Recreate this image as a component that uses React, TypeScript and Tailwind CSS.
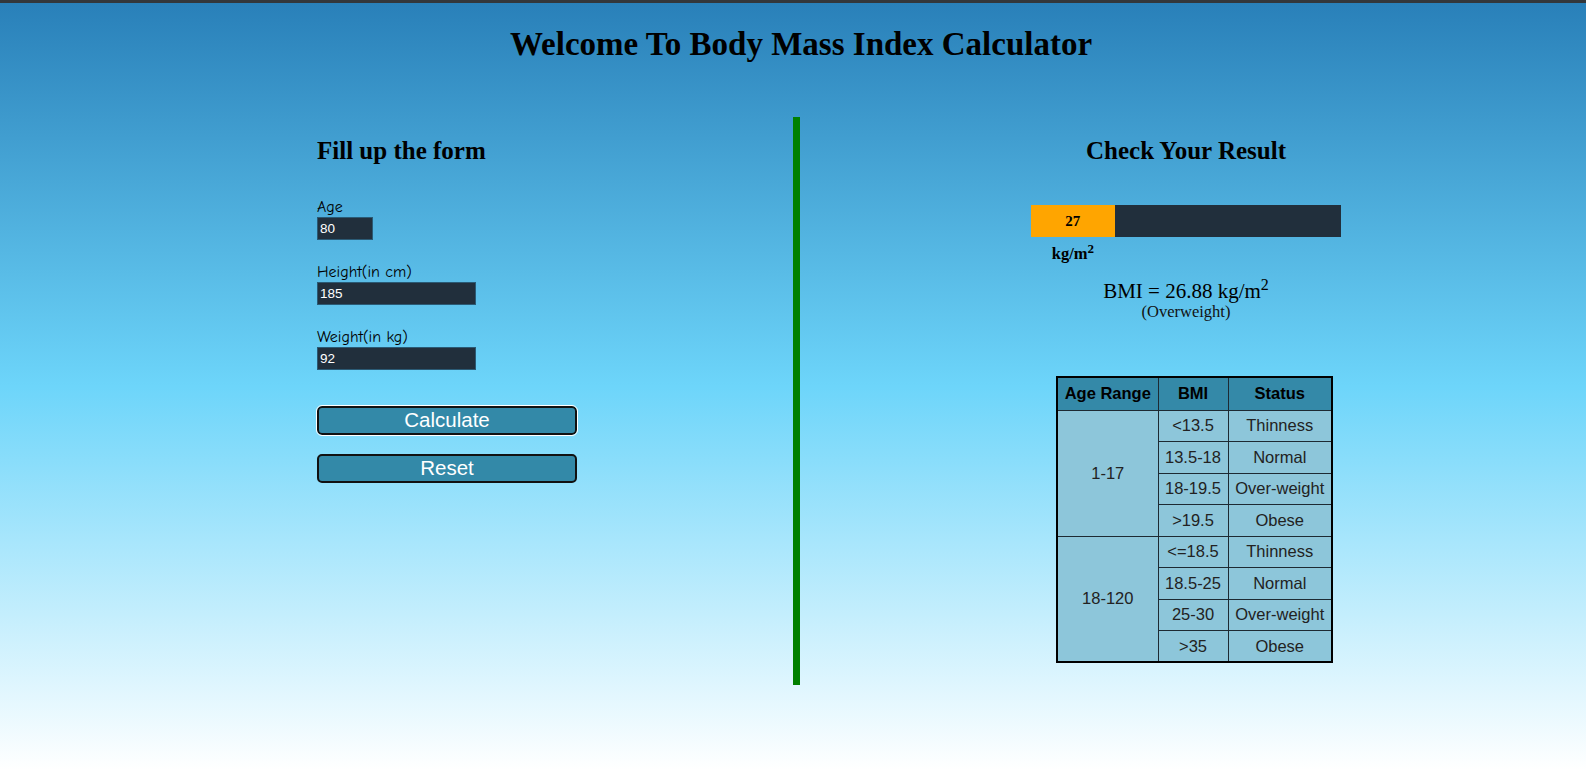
import React from "react"

const rows = [
  { age: "1-17", bmi: "<13.5", status: "Thinness" },
  { age: "", bmi: "13.5-18", status: "Normal" },
  { age: "", bmi: "18-19.5", status: "Over-weight" },
  { age: "", bmi: ">19.5", status: "Obese" },
  { age: "18-120", bmi: "<=18.5", status: "Thinness" },
  { age: "", bmi: "18.5-25", status: "Normal" },
  { age: "", bmi: "25-30", status: "Over-weight" },
  { age: "", bmi: ">35", status: "Obese" },
]

const Field = ({ label, value, wide }: { label: string; value: string; wide?: boolean }) => (
  <div className="mb-[23px] flex flex-col">
    <label className="h-[19px] text-[16px] leading-[19px] text-black [font-family:'Comic_Sans_MS','Comic_Neue',cursive]">
      {label}
    </label>
    <input
      readOnly
      value={value}
      className={`h-[23px] ${wide ? "w-[159px]" : "w-[56px]"} border border-[#2a5a75] bg-[#212f3c] px-[2px] text-[13.5px] text-white outline-none [font-family:'Liberation_Sans',Arial,sans-serif]`}
    />
  </div>
)

export default function App() {
  const bmi = 26.88
  const pct = Math.round(bmi)
  const serif = "[font-family:'Liberation_Serif','Times_New_Roman',serif]"
  const sans = "[font-family:'Liberation_Sans',Arial,sans-serif]"

  return (
    <div className="flex min-h-[770px] flex-col border-t-[3px] border-[#33373b] bg-[linear-gradient(#2980b9,#6dd5fa,#ffffff)]">
      <h1 className={`pl-[16px] pt-[23px] text-center text-[33px] font-bold leading-[37px] text-black ${serif}`}>
        Welcome To Body Mass Index Calculator
      </h1>

      <div className="mt-[54px] flex">
        {/* form */}
        <div className="w-[793px] pl-[317px] pt-[20px]">
          <h2 className={`text-[25px] font-bold leading-[28px] text-black ${serif}`}>Fill up the form</h2>
          <div className="mt-[33px]">
            <Field label="Age" value="80" />
            <Field label="Height(in cm)" value="185" wide />
            <Field label="Weight(in kg)" value="92" wide />
          </div>
          <div className="mt-[36px] flex flex-col gap-[19px]">
            <button
              className={`h-[29px] w-[260px] rounded-[5px] border-2 border-[#111] bg-[#3389a8] text-[20.5px] leading-none text-white outline outline-1 outline-white ${sans}`}
            >
              Calculate
            </button>
            <button
              className={`h-[29px] w-[260px] rounded-[5px] border-2 border-[#111] bg-[#3389a8] text-[20.5px] leading-none text-white ${sans}`}
            >
              Reset
            </button>
          </div>
        </div>

        <div className="h-[568px] w-[7px] bg-[#008000]" />

        {/* result */}
        <div className="flex-1 pl-[231px] pt-[20px]">
          <div className="w-[310px]">
            <h2 className={`text-center text-[25px] font-bold leading-[28px] text-black ${serif}`}>Check Your Result</h2>
            <div className="mt-[40px] flex h-[32px] w-[310px] bg-[#212f3c]">
              <div
                className={`flex h-full items-center justify-center bg-[#ffa500] text-[15px] font-bold text-black ${serif}`}
                style={{ width: `${pct}%` }}
              >
                {pct}
              </div>
            </div>
            <div
              className={`mt-[7px] text-center text-[16.5px] font-bold leading-[20px] text-black ${serif}`}
              style={{ width: `${pct}%` }}
            >
              kg/m<sup className="text-[13px]">2</sup>
            </div>
            <div className={`mt-[15px] text-center text-[21px] leading-[24px] text-black ${serif}`}>
              BMI = {bmi} kg/m<sup className="text-[16px]">2</sup>
            </div>
            <div className={`text-center text-[16.5px] leading-[17px] text-[#111] ${serif}`}>(Overweight)</div>
          </div>

          <table className={`ml-[25px] mt-[56px] border-collapse border-2 border-black text-[16.5px] text-[#222] ${sans}`}>
            <thead>
              <tr className="h-[33px] bg-[#3489a8]">
                <th className="w-[101px] border border-[#1d2a33] font-bold text-black">Age Range</th>
                <th className="w-[70px] border border-[#1d2a33] font-bold text-black">BMI</th>
                <th className="w-[104px] border border-[#1d2a33] font-bold text-black">Status</th>
              </tr>
            </thead>
            <tbody className="bg-[#8dc6da]">
              {rows.map((r, i) => (
                <tr key={i} className="h-[31.5px]">
                  {r.age && (
                    <td rowSpan={4} className="border border-[#1d2a33] text-center">
                      {r.age}
                    </td>
                  )}
                  <td className="border border-[#1d2a33] text-center">{r.bmi}</td>
                  <td className="border border-[#1d2a33] text-center">{r.status}</td>
                </tr>
              ))}
            </tbody>
          </table>
        </div>
      </div>
    </div>
  )
}
